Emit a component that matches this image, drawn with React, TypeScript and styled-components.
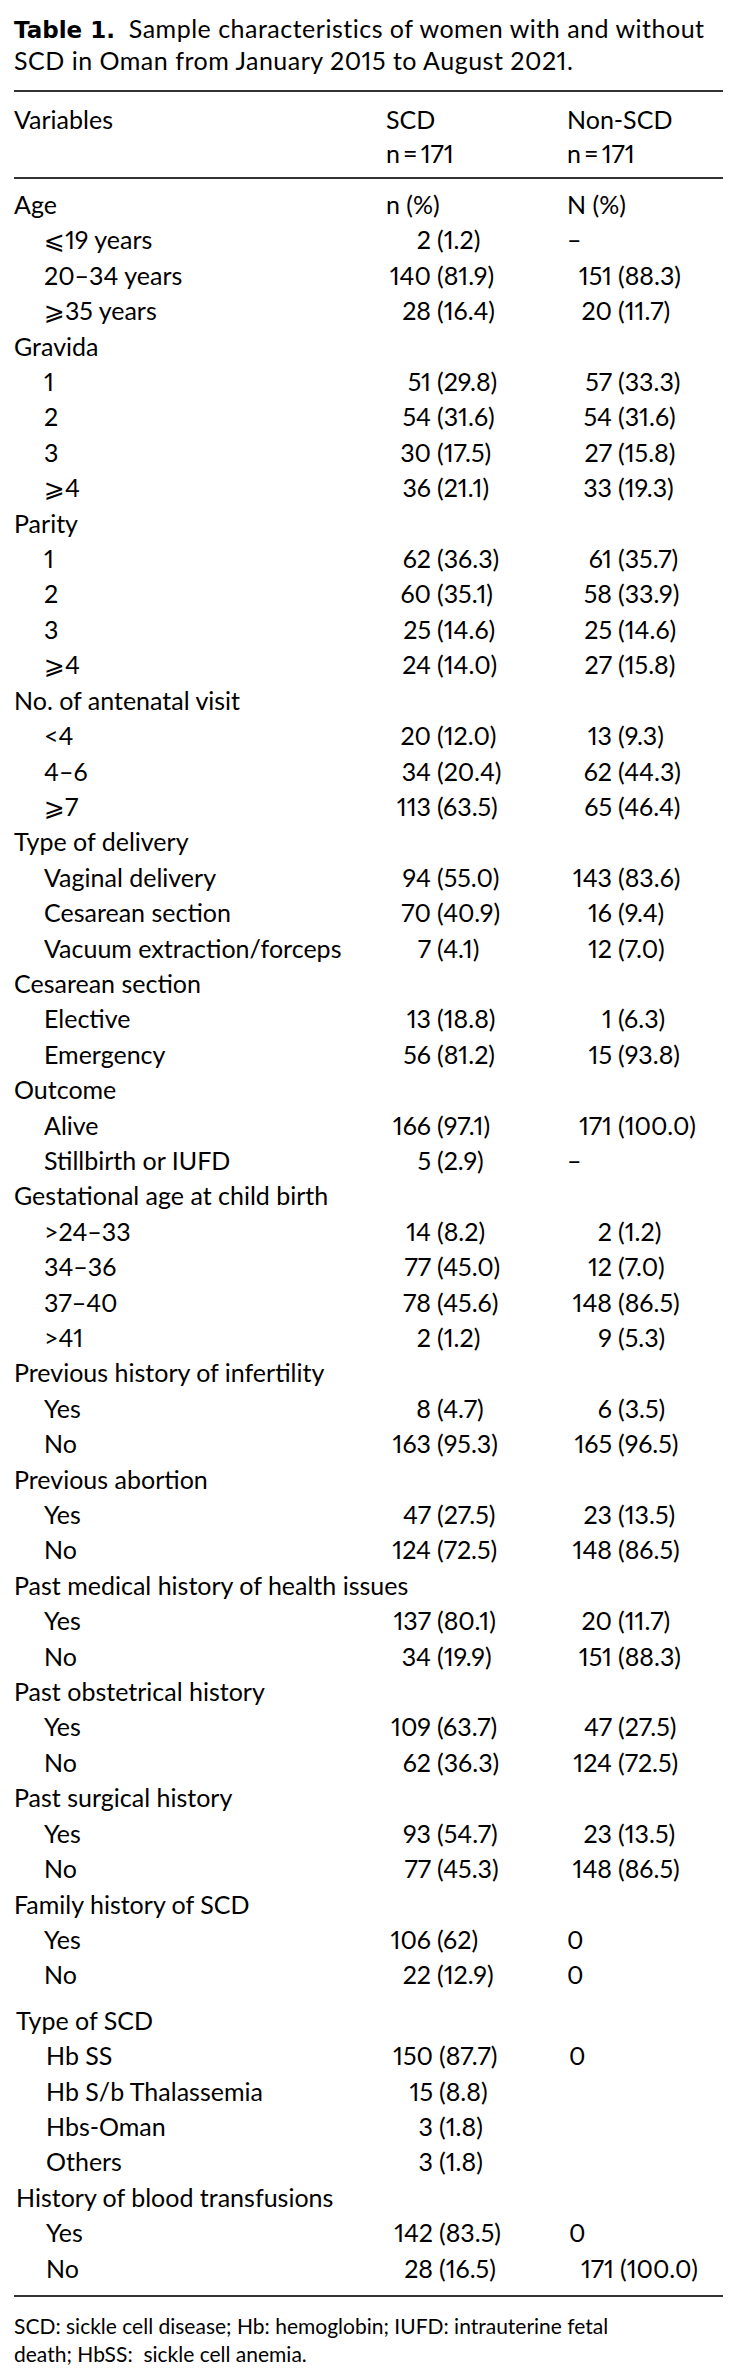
import React from "react";
import styled, { createGlobalStyle } from "styled-components";

type Value = string | [string, string] | undefined;

interface Row {
  label: string;
  group?: boolean;
  scd?: Value;
  non?: Value;
}

const GlobalStyle = createGlobalStyle`
  body {
    margin: 0;
    background: #ffffff;
  }
`;

const top: Row[] = [
  { label: "Age", group: true, scd: "n (%)", non: "N (%)" },
  { label: "⩽19 years", scd: ["2", "(1.2)"], non: "–" },
  { label: "20–34 years", scd: ["140", "(81.9)"], non: ["151", "(88.3)"] },
  { label: "⩾35 years", scd: ["28", "(16.4)"], non: ["20", "(11.7)"] },
  { label: "Gravida", group: true },
  { label: "1", scd: ["51", "(29.8)"], non: ["57", "(33.3)"] },
  { label: "2", scd: ["54", "(31.6)"], non: ["54", "(31.6)"] },
  { label: "3", scd: ["30", "(17.5)"], non: ["27", "(15.8)"] },
  { label: "⩾4", scd: ["36", "(21.1)"], non: ["33", "(19.3)"] },
  { label: "Parity", group: true },
  { label: "1", scd: ["62", "(36.3)"], non: ["61", "(35.7)"] },
  { label: "2", scd: ["60", "(35.1)"], non: ["58", "(33.9)"] },
  { label: "3", scd: ["25", "(14.6)"], non: ["25", "(14.6)"] },
  { label: "⩾4", scd: ["24", "(14.0)"], non: ["27", "(15.8)"] },
  { label: "No. of antenatal visit", group: true },
  { label: "<4", scd: ["20", "(12.0)"], non: ["13", "(9.3)"] },
  { label: "4–6", scd: ["34", "(20.4)"], non: ["62", "(44.3)"] },
  { label: "⩾7", scd: ["113", "(63.5)"], non: ["65", "(46.4)"] },
  { label: "Type of delivery", group: true },
  { label: "Vaginal delivery", scd: ["94", "(55.0)"], non: ["143", "(83.6)"] },
  { label: "Cesarean section", scd: ["70", "(40.9)"], non: ["16", "(9.4)"] },
  { label: "Vacuum extraction/forceps", scd: ["7", "(4.1)"], non: ["12", "(7.0)"] },
  { label: "Cesarean section", group: true },
  { label: "Elective", scd: ["13", "(18.8)"], non: ["1", "(6.3)"] },
  { label: "Emergency", scd: ["56", "(81.2)"], non: ["15", "(93.8)"] },
  { label: "Outcome", group: true },
  { label: "Alive", scd: ["166", "(97.1)"], non: ["171", "(100.0)"] },
  { label: "Stillbirth or IUFD", scd: ["5", "(2.9)"], non: "–" },
  { label: "Gestational age at child birth", group: true },
  { label: ">24–33", scd: ["14", "(8.2)"], non: ["2", "(1.2)"] },
  { label: "34–36", scd: ["77", "(45.0)"], non: ["12", "(7.0)"] },
  { label: "37–40", scd: ["78", "(45.6)"], non: ["148", "(86.5)"] },
  { label: ">41", scd: ["2", "(1.2)"], non: ["9", "(5.3)"] },
  { label: "Previous history of infertility", group: true },
  { label: "Yes", scd: ["8", "(4.7)"], non: ["6", "(3.5)"] },
  { label: "No", scd: ["163", "(95.3)"], non: ["165", "(96.5)"] },
  { label: "Previous abortion", group: true },
  { label: "Yes", scd: ["47", "(27.5)"], non: ["23", "(13.5)"] },
  { label: "No", scd: ["124", "(72.5)"], non: ["148", "(86.5)"] },
  { label: "Past medical history of health issues", group: true },
  { label: "Yes", scd: ["137", "(80.1)"], non: ["20", "(11.7)"] },
  { label: "No", scd: ["34", "(19.9)"], non: ["151", "(88.3)"] },
  { label: "Past obstetrical history", group: true },
  { label: "Yes", scd: ["109", "(63.7)"], non: ["47", "(27.5)"] },
  { label: "No", scd: ["62", "(36.3)"], non: ["124", "(72.5)"] },
  { label: "Past surgical history", group: true },
  { label: "Yes", scd: ["93", "(54.7)"], non: ["23", "(13.5)"] },
  { label: "No", scd: ["77", "(45.3)"], non: ["148", "(86.5)"] },
  { label: "Family history of SCD", group: true },
  { label: "Yes", scd: ["106", "(62)"], non: "0" },
  { label: "No", scd: ["22", "(12.9)"], non: "0" },
];

const bottom: Row[] = [
  { label: "Type of SCD", group: true },
  { label: "Hb SS", scd: ["150", "(87.7)"], non: "0" },
  { label: "Hb S/b Thalassemia", scd: ["15", "(8.8)"] },
  { label: "Hbs-Oman", scd: ["3", "(1.8)"] },
  { label: "Others", scd: ["3", "(1.8)"] },
  { label: "History of blood transfusions", group: true },
  { label: "Yes", scd: ["142", "(83.5)"], non: "0" },
  { label: "No", scd: ["28", "(16.5)"], non: ["171", "(100.0)"] },
];

function Cell({ value }: { value: Value }) {
  if (!value) return <Num />;
  if (typeof value === "string") return <Num>{value}</Num>;
  return (
    <Num>
      <Count>{value[0]}</Count>
      <Pct>{value[1]}</Pct>
    </Num>
  );
}

function Rows({ rows }: { rows: Row[] }) {
  return (
    <>
      {rows.map((row, i) => (
        <TableRow key={i}>
          <Label $indent={!row.group}>{row.label}</Label>
          <Cell value={row.scd} />
          <Cell value={row.non} />
        </TableRow>
      ))}
    </>
  );
}

export default function App() {
  return (
    <Page>
      <GlobalStyle />
      <Caption>
        <TableNo>Table 1.</TableNo>&nbsp; Sample characteristics of women with and without
        <br />
        SCD in Oman from January 2015 to August 2021.
      </Caption>
      <Head>
        <TableRow>
          <Label>Variables</Label>
          <Num>
            SCD
            <br />
            n&#8201;=&#8201;171
          </Num>
          <Num>
            Non-SCD
            <br />
            n&#8201;=&#8201;171
          </Num>
        </TableRow>
      </Head>
      <Body>
        <Rows rows={top} />
        <Section>
          <Rows rows={bottom} />
        </Section>
      </Body>
      <Footnote>
        SCD: sickle cell disease; Hb: hemoglobin; IUFD: intrauterine fetal
        <br />
        death; HbSS:&nbsp; sickle cell anemia.
      </Footnote>
    </Page>
  );
}

const Page = styled.div`
  width: 742px;
  box-sizing: border-box;
  padding: 13px 19px 0 14px;
  font-family: "Lato", "DejaVu Sans", sans-serif;
  font-size: 25px;
  font-variant-numeric: proportional-nums;
  color: #000;
`;

const Caption = styled.p`
  margin: 0 0 15px;
  line-height: 30px;
  letter-spacing: 0.5px;
`;

const TableNo = styled.strong`
  font-family: "DejaVu Sans", sans-serif;
  font-size: 23px;
  font-weight: 700;
  letter-spacing: 0;
`;

const Head = styled.div`
  border-top: 2px solid #333;
  border-bottom: 2px solid #333;
  padding: 10px 0 7px;
  line-height: 34px;
`;

const Body = styled.div`
  padding: 8px 0 9px;
  border-bottom: 2px solid #333;
  line-height: 35.4px;
`;

const Section = styled.div`
  margin-top: 10px;
  padding-left: 2px;
`;

const TableRow = styled.div`
  display: grid;
  grid-template-columns: 372px 181px 1fr;
  white-space: nowrap;
`;

const Label = styled.div<{ $indent?: boolean }>`
  padding-left: ${({ $indent }) => ($indent ? "30px" : "0")};
`;

const Num = styled.div`
  display: flex;
`;

const Count = styled.span`
  width: 45px;
  text-align: right;
`;

const Pct = styled.span`
  padding-left: 6px;
`;

const Footnote = styled.p`
  margin: 15px 0 0;
  line-height: 28px;
  font-size: 21px;
`;
